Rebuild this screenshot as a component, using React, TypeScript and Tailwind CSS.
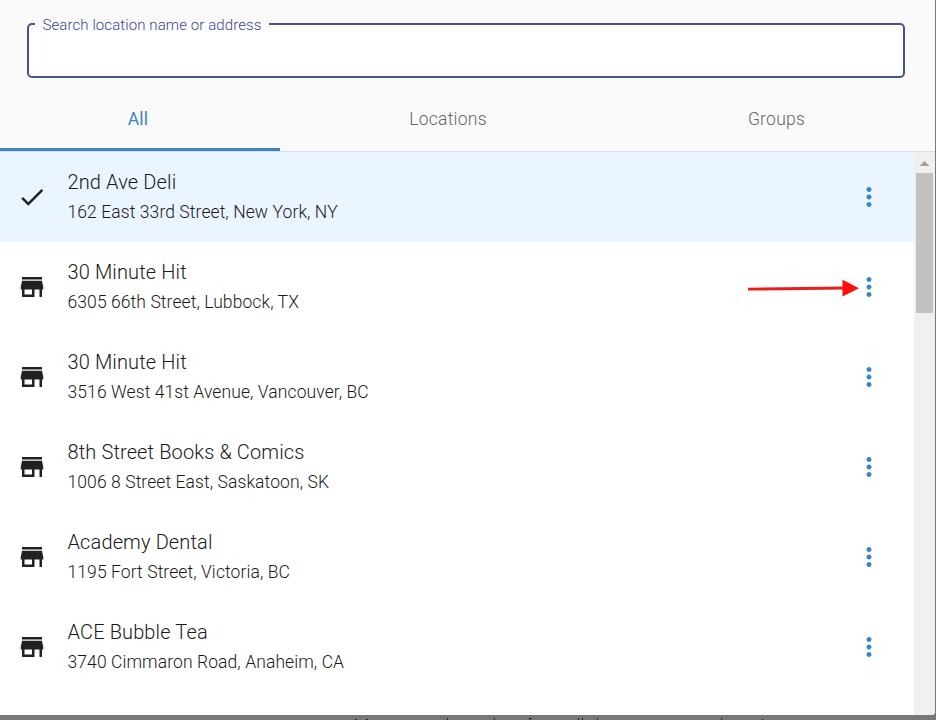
const locations = [
  { name: '2nd Ave Deli', address: '162 East 33rd Street, New York, NY', selected: true },
  { name: '30 Minute Hit', address: '6305 66th Street, Lubbock, TX' },
  { name: '30 Minute Hit', address: '3516 West 41st Avenue, Vancouver, BC' },
  { name: '8th Street Books & Comics', address: '1006 8 Street East, Saskatoon, SK' },
  { name: 'Academy Dental', address: '1195 Fort Street, Victoria, BC' },
  { name: 'ACE Bubble Tea', address: '3740 Cimmaron Road, Anaheim, CA' },
];

const CHECK = 'M9 16.17 4.83 12l-1.42 1.41L9 19 21 7l-1.41-1.41z';
const STORE = 'M20 4H4v2h16V4zm1 10v-2l-1-5H4l-1 5v2h1v6h10v-6h4v6h2v-6h1zm-9 4H6v-4h6v4z';
const MORE =
  'M12 8c1.1 0 2-.9 2-2s-.9-2-2-2-2 .9-2 2 .9 2 2 2zm0 2c-1.1 0-2 .9-2 2s.9 2 2 2 2-.9 2-2-.9-2-2-2zm0 6c-1.1 0-2 .9-2 2s.9 2 2 2 2-.9 2-2-.9-2-2-2z';

function Icon({ d, className }: { d: string; className: string }) {
  return (
    <svg viewBox="0 0 24 24" className={`size-[30px] shrink-0 overflow-visible fill-current ${className}`}>
      <path d={d} />
    </svg>
  );
}

function SearchField() {
  return (
    <fieldset className="ml-[27px] mt-[15px] h-[63px] w-[878px] rounded-[5px] border-2 border-[#465390] bg-white pl-[6px]">
      <legend className="h-[18px] whitespace-nowrap px-[7.5px] text-[15px] leading-[20px] font-light tracking-[0.095px] text-[#36429a]">
        Search location name or address
      </legend>
    </fieldset>
  );
}

function Tabs() {
  return (
    <div className="flex h-[74px] border-b border-[#dddddd] text-[17.5px] font-light tracking-[0.25px] text-[#666666]">
      <div className="flex w-[280px] justify-center border-b-[3px] border-[#3884c6] pr-1 pt-[27px] font-normal leading-[28px] text-[#3884c6]">All</div>
      <div className="w-[336px] pt-[27px] text-center leading-[28px]">Locations</div>
      <div className="w-[319px] pl-[2px] pt-[27px] text-center leading-[28px]">Groups</div>
    </div>
  );
}

export default function App() {
  return (
    <div className="relative h-[720px] w-[936px] overflow-hidden bg-[#797777] font-['Roboto',sans-serif]">
      <div className="flex h-[715px] w-[935px] flex-col overflow-hidden rounded-br-[4px] bg-[#fafafa]">
        <SearchField />
        <Tabs />
        <div className="flex min-h-0 flex-1 bg-white">
          <div className="flex-1">
            {locations.map((l, i) => (
              <div key={i} className={`flex h-[90px] items-center pl-[17.4px] pr-[30px] ${l.selected ? 'bg-[#ebf5ff]' : 'bg-white'}`}>
                <Icon d={l.selected ? CHECK : STORE} className="text-[#212121]" />
                <div className="ml-[20.1px] flex-1 text-[#1a1a1a]">
                  <div className="text-[20px] leading-[30px] font-light tracking-[0.13px]">{l.name}</div>
                  <div className="text-[17.5px] leading-[30px] font-light tracking-[0.09px]">{l.address}</div>
                </div>
                <Icon d={MORE} className="text-[#3884c6]" />
              </div>
            ))}
          </div>
          <div className="flex w-[21px] flex-col items-center bg-[#f0f0f0]">
            <svg viewBox="0 0 21 21" className="size-[21px]">
              <path d="M5.5 14 10.5 9l5 5z" fill="#a3a3a3" />
            </svg>
            <div className="h-[140px] w-[17px] bg-[#c1c1c1]" />
          </div>
        </div>
      </div>
      <svg viewBox="0 0 112 18" className="absolute left-[748px] top-[279px] h-[18px] w-[112px]">
        <path d="M0 10.2 96 9" stroke="#ed1c1c" strokeWidth="2.8" />
        <path d="M94.5.8 111 9.2 94.5 17.6z" fill="#ff0d0d" />
      </svg>
      {/* Tops of the dimmed page text below the dialog */}
      <svg viewBox="0 0 936 2" className="absolute left-0 top-[718px] h-[2px] w-[936px]">
        <path
          d="M355 1h2v1h-2zM366 1h2v1h-2zM447 0h1v2h-1zM494 0h1v2h-1zM529 0h3v1h-3zM529 1h1v1h-1zM578 0h1v2h-1zM582 0h1v2h-1zM597 0h1v2h-1zM721 0h1v2h-1zM762 1h1v1h-1z"
          fill="#2b2a2a"
        />
      </svg>
    </div>
  );
}
